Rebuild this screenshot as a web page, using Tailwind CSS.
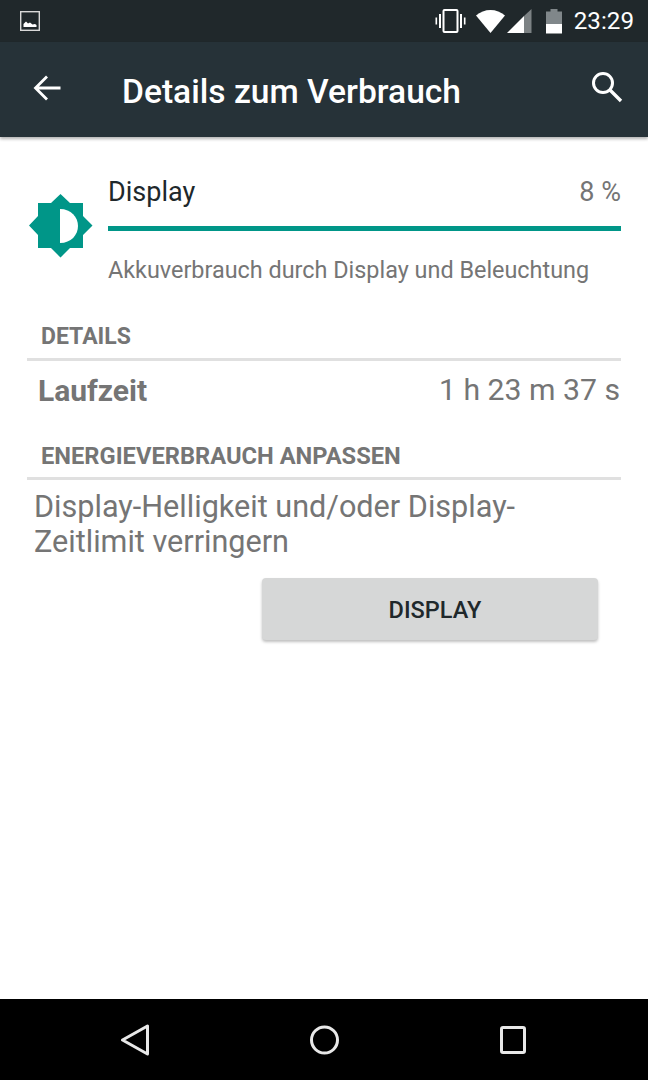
<!DOCTYPE html>
<html lang="de">
<head>
    <meta charset="UTF-8">
    <meta name="viewport" content="width=device-width, initial-scale=1.0">
    <script src="https://cdn.jsdelivr.net/npm/@tailwindcss/browser@4"></script>
    <title>Details zum Verbrauch</title>
</head>
<body class="bg-white">
    <div class="w-[648px] h-[1080px] flex flex-col overflow-hidden font-['Roboto',sans-serif]">

        <!-- status bar -->
        <div class="h-[42px] shrink-0 bg-[#20282b] flex items-center pl-[20px] pr-[14px] text-white">
            <svg width="20" height="20" viewBox="0 0 20 20">
                <rect x="0.7" y="0.7" width="18.6" height="18.6" fill="none" stroke="#d8d8d8" stroke-width="1.4"/>
                <path d="M3.5 16V13L6 10.5L8 12.5L10 11.5L12.5 13.5L15 13L16.5 14V16Z" fill="#fff"/>
            </svg>
            <svg width="31" height="26" viewBox="0 0 31 26" class="ml-auto">
                <rect x="8.5" y="2" width="14" height="22" rx="1" fill="none" stroke="#fff" stroke-width="2"/>
                <rect x="4" y="6" width="2" height="14" fill="#fff"/>
                <rect x="25" y="6" width="2" height="14" fill="#fff"/>
                <rect x="0.5" y="9.5" width="1.6" height="7" fill="#fff"/>
                <rect x="28.9" y="9.5" width="1.6" height="7" fill="#fff"/>
            </svg>
            <svg width="29" height="26" viewBox="0 0 29 26" class="ml-[10px]">
                <path d="M0 7.5C8 0 21 0 29 7.5L14.5 25Z" fill="#fff"/>
            </svg>
            <svg width="25" height="26" viewBox="0 0 25 26" class="ml-[2px]">
                <path d="M0 25L17 8V25Z" fill="#fff"/>
                <path d="M17 8L24.5 1V25H17Z" fill="#7c8284"/>
            </svg>
            <svg width="16" height="26" viewBox="0 0 16 26" class="ml-[14px]">
                <path d="M0 3.5H4.5V1H11.5V3.5H16V16H0Z" fill="#80878a"/>
                <rect x="0" y="16" width="16" height="9.5" fill="#fff"/>
            </svg>
            <span class="ml-[12px] text-[24.2px] leading-none">23:29</span>
        </div>

        <!-- action bar -->
        <div class="h-[95px] shrink-0 bg-[#263238] flex items-center text-white pl-[32px] pr-[24px] shadow-[0_2px_3px_rgba(0,0,0,0.3)] relative">
            <svg width="30" height="30" viewBox="0 0 30 30" class="mt-[-4px]">
                <path d="M28.5 15H4M15 3.5L3.5 15L15 26.5" fill="none" stroke="#fff" stroke-width="2.8"/>
            </svg>
            <h1 class="ml-[60px] text-[33.6px] font-medium leading-none mt-[5px]">Details zum Verbrauch</h1>
            <svg width="34" height="34" viewBox="0 0 34 34" class="ml-auto mt-[-5px]">
                <circle cx="13" cy="13" r="9.5" fill="none" stroke="#fff" stroke-width="3"/>
                <path d="M20 20L31 31" stroke="#fff" stroke-width="3.4"/>
            </svg>
        </div>

        <!-- usage summary -->
        <div class="flex pt-[37px] pl-[29px] pr-[27px]">
            <svg width="64" height="64" viewBox="0 0 64 64" class="mt-[20px] shrink-0">
                <path d="M31.5 0L41 9H54V22L63.5 31.5L54 41V54H41L31.5 63.5L22 54H9V41L0 31.5L9 22V9H22Z" fill="#009688"/>
                <path d="M31 15C42 15 49 23 49 32C49 41 42 49 31 49Z" fill="#fff"/>
            </svg>
            <div class="ml-[15px] flex-1">
                <div class="flex justify-between items-center h-[36px]">
                    <span class="text-[27px] text-[#20282b]">Display</span>
                    <span class="text-[27px] text-[#757575]">8 %</span>
                </div>
                <div class="h-[5px] bg-[#009688] mt-[16px]"></div>
                <p class="mt-[24px] text-[23.4px] leading-[30px] text-[#757575]">Akkuverbrauch durch Display und Beleuchtung</p>
            </div>
        </div>

        <!-- details -->
        <div class="mx-[27px] mt-[37px] border-b-[3px] border-[#e0e0e0] pl-[14px] h-[39px] text-[23px] font-bold text-[#757575] leading-[30px]">DETAILS</div>
        <div class="flex justify-between items-center mx-[27px] pl-[11px] pr-px h-[58px] text-[#757575]">
            <span class="text-[30px] font-bold">Laufzeit</span>
            <span class="text-[30.2px]">1 h 23 m 37 s</span>
        </div>

        <div class="mx-[27px] mt-[22px] border-b-[3px] border-[#e0e0e0] pl-[14px] h-[39px] text-[23.7px] font-bold text-[#757575] leading-[30px]">ENERGIEVERBRAUCH ANPASSEN</div>
        <p class="mx-[34px] mt-[9px] text-[30.6px] leading-[35px] text-[#757575]">Display-Helligkeit und/oder Display-<br>Zeitlimit verringern</p>

        <div class="flex justify-end pr-[50px] mt-[19px]">
            <button class="w-[336px] h-[62px] pl-[10px] pt-[4px] bg-[#d6d7d7] rounded-[4px] shadow-[0_2px_3px_rgba(0,0,0,0.25)] text-[23.5px] font-medium text-[#20282b]">DISPLAY</button>
        </div>

        <!-- nav bar -->
        <div class="mt-auto h-[81px] shrink-0 bg-black flex items-center justify-between pl-[121px] pr-[122px]">
            <svg width="28" height="32" viewBox="0 0 28 32">
                <path d="M1.5 16L26.5 2V30Z" fill="none" stroke="#e8e8e8" stroke-width="3" stroke-linejoin="round"/>
            </svg>
            <svg width="29" height="30" viewBox="0 0 29 30">
                <circle cx="14.5" cy="15" r="13" fill="none" stroke="#e8e8e8" stroke-width="3"/>
            </svg>
            <svg width="26" height="28" viewBox="0 0 26 28">
                <rect x="1.5" y="1.5" width="23" height="25" rx="1.5" fill="none" stroke="#e8e8e8" stroke-width="3"/>
            </svg>
        </div>
    </div>
</body>
</html>
